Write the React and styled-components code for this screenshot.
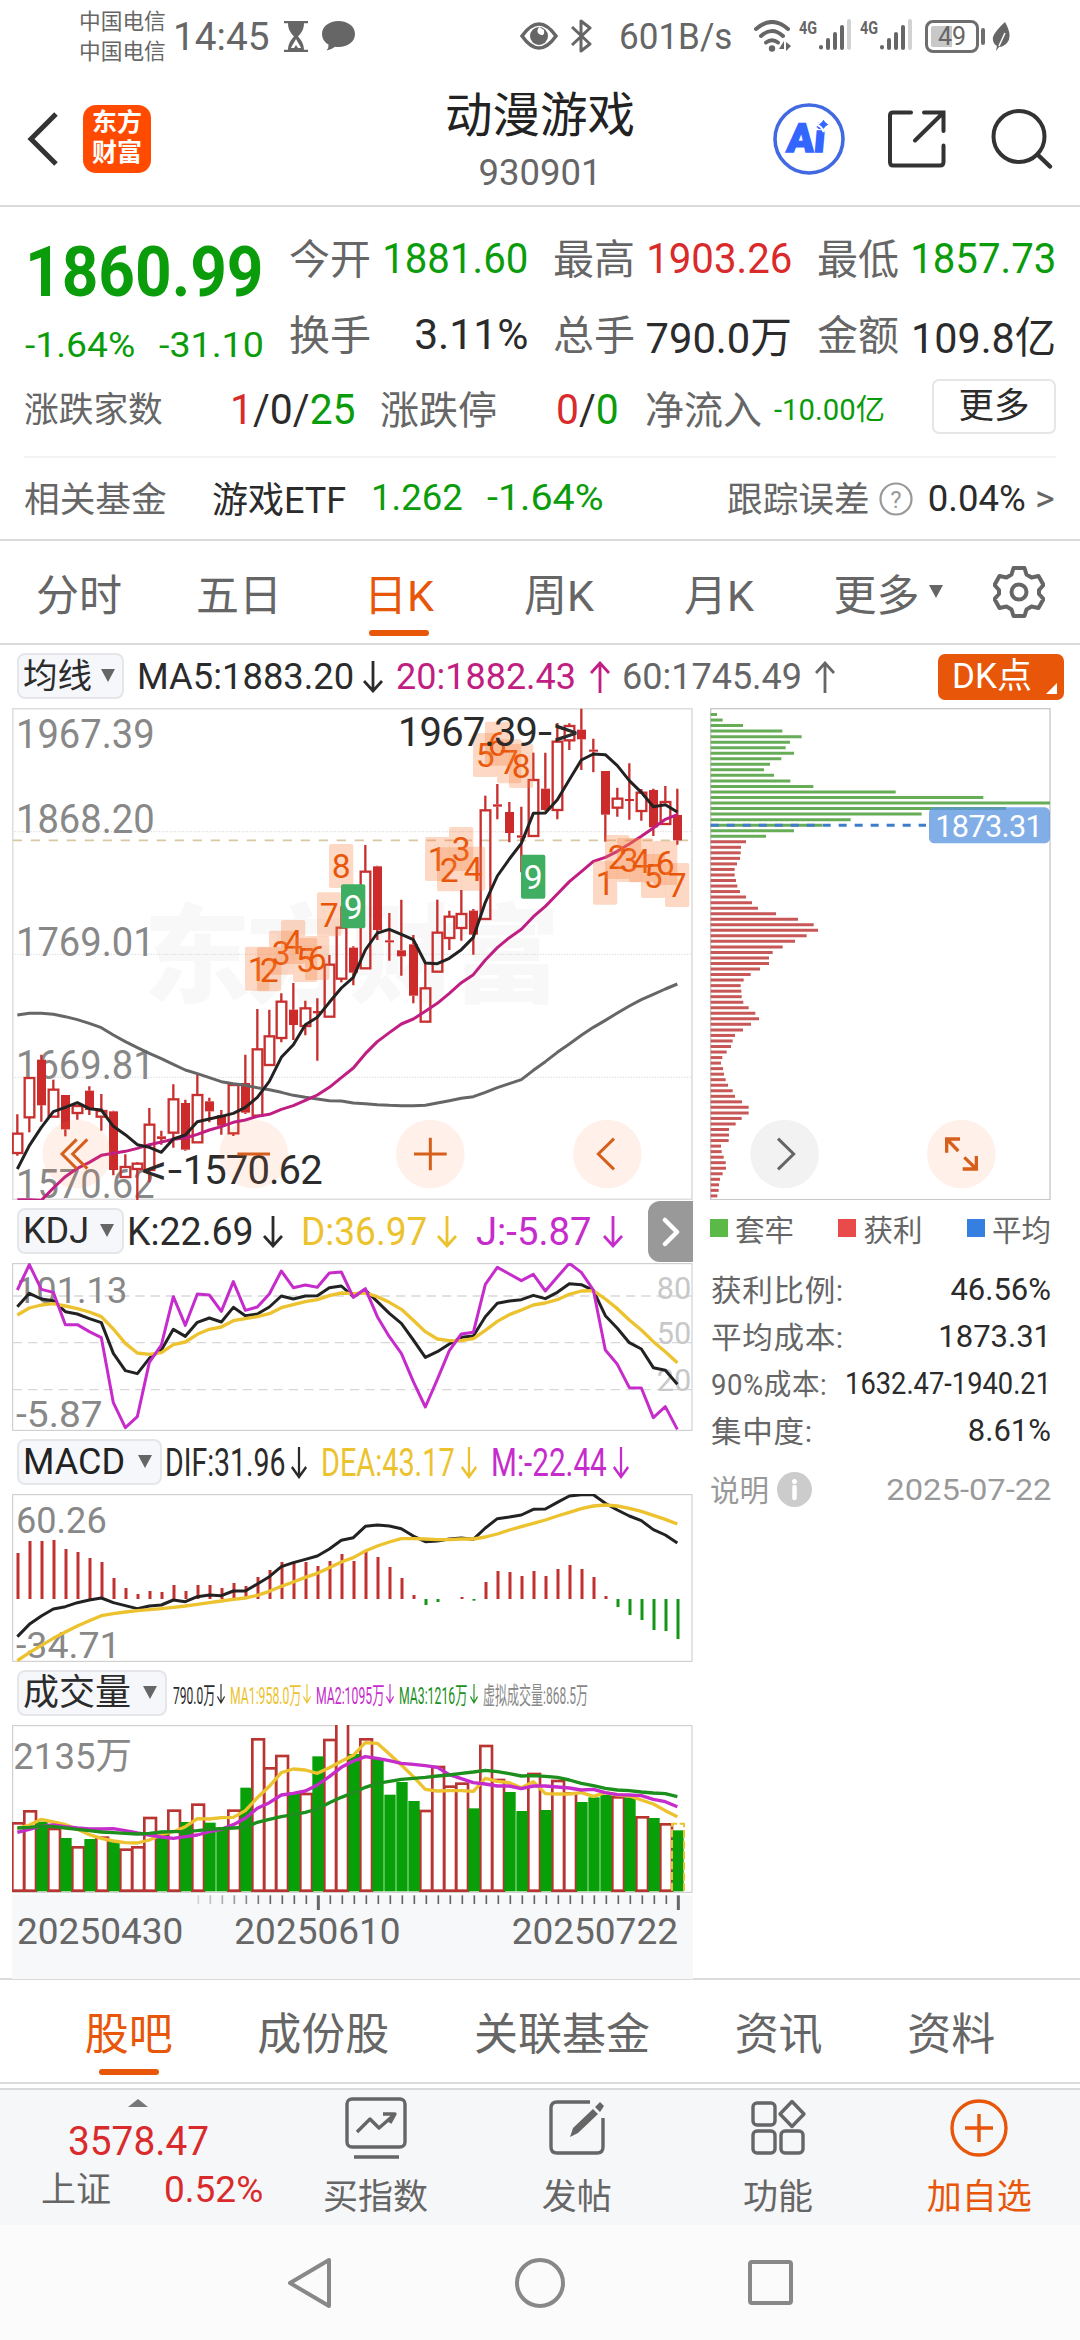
import React from 'react';
import styled, { createGlobalStyle } from 'styled-components';

const GlobalStyle = createGlobalStyle`
  * {
    box-sizing: border-box;
  }
  body {
    margin: 0;
    background: #fff;
    font-family: Roboto, 'Noto Sans CJK SC', sans-serif;
    color: #2b2b2b;
  }
  svg {
    display: block;
    flex: none;
  }
`;

const GREEN = '#0a9c0a';
const RED = '#d92b2b';
const ORANGE = '#e8560a';
const GRAY = '#666';
const DARK = '#2b2b2b';
const YELLOW = '#ecc22e';
const PURPLE = '#c52ccb';
const CANDLE = '#c8302f';

const Page = styled.div`
  width: 1080px;
  height: 2340px;
  overflow: hidden;
  background: #fff;
`;

// text squeezed horizontally by $k, taking $w pixels in its row
const Txt = styled.span`
  display: block;
  flex: none;
  width: ${(p) => (p.$w ? `${p.$w}px` : 'auto')};
  margin-left: ${(p) => p.$ml || 0}px;
  margin-bottom: ${(p) => p.$up || 0}px;
  font-size: ${(p) => p.$fs || 36}px;
  color: ${(p) => p.$c || DARK};
  white-space: nowrap;
  transform: scaleX(${(p) => p.$k || 1});
  transform-origin: ${(p) => (p.$right ? '100%' : '0')} 50%;
`;

const Tint = styled.span`
  color: ${(p) => p.$c};
`;

const Shift = styled.div`
  flex: none;
  margin-left: ${(p) => p.$ml || 0}px;
`;

/* status bar */

const StatusBar = styled.div`
  display: flex;
  align-items: center;
  height: 72px;
  padding-left: 79px;
  color: ${GRAY};
`;

const Carrier = styled.div`
  width: 88px;
  font-size: 21.7px;
  line-height: 30px;
  margin-top: 2px;
`;

const Network = styled.div`
  flex: none;
  display: flex;
  align-items: flex-start;
  height: 34px;
  width: 54px;
  margin-left: ${(p) => p.$ml}px;
  font-weight: 700;
  line-height: 18px;
`;

const Battery = styled.div`
  flex: none;
  width: 54px;
  height: 33px;
  margin-left: 11px;
  border: 3px solid #6e6e6e;
  border-radius: 8px;
  font-size: 25px;
  line-height: 28px;
  text-align: center;
  background: linear-gradient(90deg, #c8c8c8 50%, #fff 50%);
  box-shadow: inset 0 0 0 3px #fff;
`;

const BatteryTip = styled.div`
  flex: none;
  width: 4px;
  height: 17px;
  margin-left: 2px;
  border-radius: 2px;
  background: #6e6e6e;
`;

const SignalBars = () => (
  <svg width="34" height="32" viewBox="0 0 34 32">
    <g stroke="#666" strokeWidth="4" strokeLinecap="round">
      <path d="M3 28v.5" />
      <path d="M10 21v8" />
      <path d="M17 15v14" />
      <path d="M24 8v21" />
      <path d="M31 2v27" stroke="#d2d2d2" />
    </g>
  </svg>
);

const Status = () => (
  <StatusBar>
    <Carrier>
      中国电信
      <br />
      中国电信
    </Carrier>
    <Txt $ml={6} $w={111} $fs={39.5} $k={0.98} $c={GRAY}>
      14:45
    </Txt>
    <svg width="24" height="31" viewBox="0 0 24 31">
      <path d="M0 1h24M0 30h24" stroke="#666" strokeWidth="2.5" />
      <path d="M4 2h16c0 7-3 10-6 13.5c3 3.5 6 7 6 14h-16c0-7 3-10.5 6-14c-3-3.5-6-6.5-6-13.5z" fill="#666" />
      <path d="M12 18c-2 4-4 6-5 9h3l2-3l2 3h3c-1-3-3-5-5-9z" fill="#fff" />
    </svg>
    <Shift $ml={14}>
      <svg width="33" height="30" viewBox="0 0 33 30">
        <path
          d="M16.5 0C26 0 33 5.5 33 13S26 26 16.5 26q-2 0-3.5-.3Q9 29 4.5 29.5Q7 27 6.5 23.5Q0 20 0 13C0 5.5 7 0 16.5 0z"
          fill="#666"
        />
      </svg>
    </Shift>
    <Shift $ml={165}>
      <svg width="38" height="28" viewBox="0 0 38 28">
        <path d="M2 14Q19-10 36 14Q19 38 2 14z" fill="none" stroke="#666" strokeWidth="3.5" />
        <circle cx="19" cy="14" r="9" fill="#666" />
        <path d="M19 5q-4 6 2 8q4 1 3-5z" fill="#fff" />
      </svg>
    </Shift>
    <Shift $ml={12}>
      <svg width="22" height="34" viewBox="0 0 22 34">
        <path d="M2 8l18 17l-9 7V2l9 7L2 26" fill="none" stroke="#666" strokeWidth="3" strokeLinejoin="round" />
      </svg>
    </Shift>
    <Txt $ml={27} $w={135} $fs={36.5} $k={0.96} $c={GRAY}>
      601B/s
    </Txt>
    <svg width="37" height="32" viewBox="0 0 37 32">
      <g fill="none" stroke="#666" strokeWidth="4" strokeLinecap="round">
        <path d="M2 9Q18-5 34 9" />
        <path d="M7 16Q18 6 29 16" />
        <path d="M12 22.5Q18 18 24 22.5" />
      </g>
      <circle cx="18" cy="28.5" r="3.2" fill="#666" />
      <path d="M25 29h5v-8zM32 22v9l5-5z" fill="#666" />
    </svg>
    <Network $ml={8}>
      <Txt $w={19} $fs={18} $k={0.8} $c={GRAY}>
        4G
      </Txt>
      <SignalBars />
    </Network>
    <Network $ml={7}>
      <Txt $w={19} $fs={18} $k={0.8} $c={GRAY}>
        4G
      </Txt>
      <SignalBars />
    </Network>
    <Battery>49</Battery>
    <BatteryTip />
    <Shift $ml={7}>
      <svg width="18" height="29" viewBox="0 0 18 29">
        <path d="M13 0q8 14 2 21q-4 4-8 4l-3 4l1-5q-5-3-4-9Q3 9 13 0z" fill="#666" />
        <path d="M7 24L13 11" stroke="#fff" strokeWidth="1.5" />
      </svg>
    </Shift>
  </StatusBar>
);

/* title bar */

const Header = styled.div`
  display: grid;
  grid-template-columns: 308px 464px 308px;
  align-items: center;
  height: 135px;
  border-bottom: 2px solid #dadada;
`;

const HeaderSide = styled.div`
  display: flex;
  align-items: center;
`;

const Logo = styled.div`
  width: 68px;
  height: 68px;
  margin-left: 24px;
  padding: 3px 9px;
  border-radius: 13px;
  background: #ff4a00;
  color: #fff;
  font-size: 25px;
  font-weight: 700;
  line-height: 30px;
`;

const Title = styled.div`
  text-align: center;
  font-size: 47.5px;
  line-height: 58px;
  margin-top: 5px;
  color: #222;
`;

const Code = styled.div`
  text-align: center;
  font-size: 36.5px;
  line-height: 44px;
  margin-top: 6px;
  color: ${GRAY};
`;

const TitleBar = () => (
  <Header>
    <HeaderSide>
      <Shift $ml={26}>
        <svg width="33" height="56" viewBox="0 0 33 56">
          <path d="M30 3L5 28L30 53" fill="none" stroke="#333" strokeWidth="5" />
        </svg>
      </Shift>
      <Logo>
        东方
        <br />
        财富
      </Logo>
    </HeaderSide>
    <div>
      <Title>动漫游戏</Title>
      <Code>930901</Code>
    </div>
    <HeaderSide>
      <svg width="74" height="74" viewBox="0 0 74 74">
        <circle cx="37" cy="37" r="34" fill="none" stroke="#4169e1" strokeWidth="3.6" />
        <g transform="translate(4.5 0) skewX(-5)">
          <text
            x="14"
            y="50"
            fontSize="40"
            fontWeight="900"
            fontFamily="Roboto, sans-serif"
            fill="#3366ff"
            stroke="#3366ff"
            strokeWidth="1.5"
          >
            Ai
          </text>
        </g>
        <path
          d="M51.5 14.5q1.5 6.500 7.500 8q-6 1.500-7.500 7.500q-1.500-6-7.500-7.500q6-1.500 7.500-8z"
          fill="#3366ff"
          stroke="#fff"
          strokeWidth="2"
        />
      </svg>
      <Shift $ml={41}>
        <svg width="60" height="60" viewBox="0 0 60 60">
          <path
            d="M24 3.5H6q-3 0-3 3V53q0 3.500 3 3.500H53q3.500 0 3.500-3.500V36.500M37 3.500H56.500V22M56 4L28 31.500"
            fill="none"
            stroke="#333"
            strokeWidth="4"
            strokeLinecap="round"
          />
        </svg>
      </Shift>
      <Shift $ml={43}>
        <svg width="64" height="62" viewBox="0 0 64 62">
          <circle cx="29" cy="28.5" r="25.5" fill="none" stroke="#333" strokeWidth="4" />
          <path d="M48 47L60 58.5" stroke="#333" strokeWidth="4.5" strokeLinecap="round" />
        </svg>
      </Shift>
    </HeaderSide>
  </Header>
);

/* quote */

const Quote = styled.div`
  height: 334px;
  padding: 14px 24px 0;
  border-bottom: 2px solid #dadada;
`;

const QuoteTop = styled.div`
  display: flex;
  height: 151px;
`;

const PriceBlock = styled.div`
  width: 265px;
  padding: 15px 0 0 1px;
`;

const Price = styled(Txt)`
  font-weight: 700;
  line-height: 71px;
`;

const ChangeRow = styled.div`
  display: flex;
  margin-top: 20px;
  line-height: 37px;
`;

const StatGrid = styled.div`
  display: grid;
  grid-template-columns: repeat(3, 239px);
  grid-auto-rows: 75.5px;
  column-gap: 25px;
`;

const Stat = styled.div`
  display: flex;
  justify-content: space-between;
  align-items: center;
`;

const Row = styled.div`
  display: flex;
  align-items: center;
  height: ${(p) => p.$h}px;
`;

const MoreButton = styled.div`
  width: 124px;
  height: 55px;
  margin: 0 0 4px auto;
  border: 2px solid #e6e6e6;
  border-radius: 7px;
  font-size: 35.5px;
  line-height: 50px;
  text-align: center;
`;

const Divider = styled.div`
  height: 2px;
  margin-top: 11px;
  background: #f3f3f3;
`;

const STATS = [
  ['今开', '1881.60', GREEN, 0.935],
  ['最高', '1903.26', RED, 0.935],
  ['最低', '1857.73', GREEN, 0.935],
  ['换手', '3.11%', DARK, 0.99],
  ['总手', '790.0万', DARK, 0.97],
  ['金额', '109.8亿', DARK, 0.96],
];

const QuotePanel = () => (
  <Quote>
    <QuoteTop>
      <PriceBlock>
        <Price $fs={71} $k={0.9} $c={GREEN}>
          1860.99
        </Price>
        <ChangeRow>
          <Txt $w={134} $fs={35.5} $k={1.05} $c={GREEN}>
            -1.64%
          </Txt>
          <Txt $fs={35.5} $k={1.06} $c={GREEN}>
            -31.10
          </Txt>
        </ChangeRow>
      </PriceBlock>
      <StatGrid>
        {STATS.map(([label, value, color, k]) => (
          <Stat key={label}>
            <Txt $fs={41} $c={GRAY} $up={5}>
              {label}
            </Txt>
            <Txt $fs={43} $k={k} $c={color} $up={1} $right>
              {value}
            </Txt>
          </Stat>
        ))}
      </StatGrid>
    </QuoteTop>
    <Row $h={73}>
      <Txt $w={206} $fs={34.7} $c={GRAY} $up={4}>
        涨跌家数
      </Txt>
      <Txt $w={150} $fs={43} $k={0.95}>
        <Tint $c={RED}>1</Tint>/0/<Tint $c={GREEN}>25</Tint>
      </Txt>
      <Txt $w={176} $fs={39} $c={GRAY} $up={4}>
        涨跌停
      </Txt>
      <Txt $w={89} $fs={43} $k={0.95}>
        <Tint $c={RED}>0</Tint>/<Tint $c={GREEN}>0</Tint>
      </Txt>
      <Txt $w={129} $fs={39} $c={GRAY} $up={4}>
        净流入
      </Txt>
      <Txt $fs={29} $k={1.01} $c={GREEN} $up={4}>
        -10.00亿
      </Txt>
      <MoreButton>更多</MoreButton>
    </Row>
    <Divider />
    <Row $h={81}>
      <Txt $w={188} $fs={35.7} $c={GRAY} $up={5}>
        相关基金
      </Txt>
      <Txt $w={159} $fs={36} $up={4}>
        游戏ETF
      </Txt>
      <Txt $w={116} $fs={36.5} $k={1} $c={GREEN} $up={2}>
        1.262
      </Txt>
      <Txt $fs={36.5} $k={1.08} $c={GREEN} $up={2}>
        -1.64%
      </Txt>
      <Txt $ml={132} $fs={35.7} $c={GRAY} $up={5}>
        跟踪误差
      </Txt>
      <Shift $ml={9}>
        <svg width="34" height="34" viewBox="0 0 34 34">
          <circle cx="17" cy="17" r="15.5" fill="none" stroke="#999" strokeWidth="2.2" />
          <text x="17" y="25.5" fontSize="24" textAnchor="middle" fill="#999">
            ?
          </text>
        </svg>
      </Shift>
      <Txt $ml={15} $w={107} $fs={36.5} $k={1}>
        0.04%
      </Txt>
      <Txt $fs={36} $k={1.05} $c={GRAY}>
        &gt;
      </Txt>
    </Row>
  </Quote>
);

/* period tabs */

const Periods = styled.div`
  display: grid;
  grid-template-columns: repeat(5, 160px) 178px 84px;
  height: 104px;
  margin-left: -1px;
  border-bottom: 2px solid #dadada;
`;

const Tab = styled.div`
  display: flex;
  align-items: center;
  justify-content: center;
  position: relative;
  padding-bottom: 1px;
  font-size: ${(p) => p.$fs || 43}px;
  color: ${(p) => (p.$active ? ORANGE : GRAY)};

  &::after {
    content: '';
    display: ${(p) => (p.$active ? 'block' : 'none')};
    position: absolute;
    left: 50%;
    bottom: 7px;
    width: 60px;
    height: 6px;
    margin-left: -30px;
    border-radius: 3px;
    background: ${ORANGE};
  }
`;

const Caret = styled.i`
  flex: none;
  margin-left: ${(p) => p.$ml || 0}px;
  border: solid transparent;
  border-width: 13px 7px 0;
  border-top-color: ${GRAY};
`;

const PeriodTabs = () => (
  <Periods>
    {['分时', '五日', '日K', '周K', '月K'].map((name) => (
      <Tab key={name} $active={name === '日K'}>
        {name}
      </Tab>
    ))}
    <Tab>
      更多
      <Caret $ml={9} />
    </Tab>
    <Tab>
      <svg width="52" height="52" viewBox="0 0 52 52">
        <path
          d="M20.5 2h11l2 6.5l5 3l7-1.5l5 9l-4.5 5v4l4.5 5l-5 9l-7-1.5l-5 3l-2 6.5h-11l-2-6.5l-5-3l-7 1.5l-5-9l4.5-5v-4l-4.5-5l5-9l7 1.5l5-3z"
          fill="none"
          stroke="#666"
          strokeWidth="4"
          strokeLinejoin="round"
        />
        <circle cx="26" cy="26" r="7.5" fill="none" stroke="#666" strokeWidth="4" />
      </svg>
    </Tab>
  </Periods>
);

/* indicator headers */

const IndicatorRow = styled.div`
  display: flex;
  align-items: center;
  height: 63px;
  padding-left: 17px;
`;

const Pill = styled.div`
  flex: none;
  display: flex;
  align-items: center;
  justify-content: space-between;
  width: ${(p) => p.$w}px;
  height: 46px;
  margin-bottom: 2px;
  padding: 0 ${(p) => p.$pr || 8}px 0 4px;
  border: 2px solid #e4e6ea;
  border-radius: 8px;
  background: #f6f7fa;
  font-size: 36px;
  line-height: 42px;
  color: #222;
`;

const DkButton = styled.div`
  position: relative;
  width: 126px;
  height: 46px;
  margin: 0 16px 0 auto;
  padding-left: 14px;
  border-radius: 7px;
  background: ${ORANGE};
  color: #fff;
  font-size: 35px;
  line-height: 45px;

  &::after {
    content: '';
    position: absolute;
    right: 7px;
    bottom: 6px;
    border-left: 11px solid transparent;
    border-bottom: 11px solid #fff;
  }
`;

const Arrow = ({ up, color, ml = 9, w = 20, h = 32 }) => (
  <Shift $ml={ml}>
    <svg width={w} height={h} viewBox="0 0 20 32" preserveAspectRatio="none">
      <path
        d={up ? 'M10 32V2M1 12L10 2L19 12' : 'M10 0V30M1 20L10 30L19 20'}
        fill="none"
        stroke={color}
        strokeWidth="2.8"
      />
    </svg>
  </Shift>
);

/* charts: drawn in thirds of a pixel, one candle every 12px */

const N = 56;
const cx = (i) => 52 + 36 * i;
const line = (ys) => ys.map((y, i) => `${cx(i)},${y}`).join(' ');

const Chart = styled.svg`
  margin-left: 12px;
  font-family: Roboto, 'Noto Sans CJK SC', sans-serif;
`;

const Line = ({ ys, color, width = 9 }) => (
  <polyline points={line(ys)} fill="none" stroke={color} strokeWidth={width} strokeLinejoin="round" />
);

// [hollow, body top, body bottom, high, low]
const CANDLES = [
  [1, 1298, 1357, 1241, 1365], [1, 1131, 1250, 1131, 1295], [0, 1077, 1214, 1062, 1263], [1, 1166, 1248, 1137, 1248],
  [0, 1183, 1286, 1183, 1307], [1, 1215, 1237, 1212, 1257], [0, 1170, 1228, 1157, 1243], [1, 1230, 1248, 1180, 1290],
  [0, 1232, 1408, 1230, 1424], [1, 1398, 1429, 1361, 1432], [1, 1388, 1405, 1385, 1499], [1, 1271, 1408, 1222, 1445],
  [0, 1307, 1315, 1290, 1332], [1, 1195, 1296, 1151, 1341], [0, 1207, 1347, 1197, 1350], [1, 1182, 1325, 1123, 1325],
  [0, 1202, 1232, 1191, 1265], [0, 1243, 1275, 1228, 1302], [1, 1152, 1298, 1152, 1306], [0, 1147, 1236, 1062, 1240],
  [1, 1045, 1245, 925, 1245], [1, 1006, 1093, 927, 1095], [1, 902, 1012, 878, 1025], [0, 927, 973, 847, 1018],
  [1, 922, 976, 900, 1004], [0, 931, 938, 893, 1080], [1, 791, 948, 763, 948], [1, 680, 834, 617, 845],
  [0, 741, 816, 737, 854], [1, 512, 803, 433, 803], [0, 497, 688, 495, 718], [0, 719, 725, 637, 780],
  [0, 749, 767, 597, 825], [0, 731, 885, 703, 908], [1, 862, 963, 788, 963], [1, 695, 813, 597, 813],
  [1, 647, 712, 630, 748], [1, 639, 682, 568, 720], [0, 630, 702, 625, 762], [1, 328, 655, 285, 655],
  [0, 311, 318, 250, 356], [0, 334, 397, 304, 425], [0, 404, 411, 318, 515], [1, 237, 406, 156, 406],
  [0, 264, 328, 156, 330], [1, 122, 328, 67, 356], [1, 75, 119, 68, 148], [0, 87, 116, 24, 208],
  [0, 147, 153, 114, 215], [0, 211, 342, 211, 423], [1, 293, 321, 261, 348], [0, 295, 301, 188, 357],
  [1, 275, 331, 265, 360], [0, 268, 380, 264, 406], [1, 303, 370, 256, 372], [0, 343, 419, 264, 432],
];

const MA5 = [
  1405, 1335, 1280, 1233, 1220, 1206, 1224, 1228, 1277, 1302, 1332, 1340, 1355, 1315, 1303, 1263, 1255, 1247, 1238,
  1220, 1190, 1142, 1070, 1032, 972, 950, 905, 862, 830, 748, 697, 686, 701, 717, 787, 789, 773, 747, 710, 605, 526,
  475, 428, 338, 337, 297, 237, 178, 160, 162, 195, 240, 275, 318, 312, 334,
];
const MA20 = [
  1497, 1497, 1499, 1462, 1428, 1403, 1385, 1364, 1358, 1352, 1343, 1332, 1324, 1316, 1312, 1301, 1288, 1278, 1265,
  1258, 1247, 1241, 1226, 1215, 1199, 1183, 1160, 1131, 1102, 1059, 1023, 996, 970, 955, 932, 908, 878, 846, 822, 778,
  741, 711, 686, 648, 617, 580, 543, 513, 482, 470, 452, 430, 407, 382, 356, 342,
];
const MA60 = [
  943, 938, 938, 941, 948, 957, 968, 981, 1003, 1023, 1041, 1058, 1074, 1091, 1108, 1119, 1131, 1143, 1149, 1154, 1161,
  1167, 1175, 1184, 1190, 1195, 1200, 1201, 1207, 1209, 1212, 1214, 1215, 1215, 1214, 1207, 1200, 1193, 1188, 1175,
  1161, 1149, 1137, 1109, 1083, 1055, 1030, 1004, 980, 959, 937, 916, 897, 881, 865, 850,
];

// [candle, digit, top]
const MARKS = [
  [20, 1, 738], [21, 2, 740], [22, 3, 690], [23, 4, 658], [24, 5, 712], [25, 6, 706], [26, 7, 575], [27, 8, 430],
  [28, 9, 551], [35, 1, 409], [36, 2, 440], [37, 3, 379], [38, 4, 438], [39, 5, 97], [40, 6, 63], [41, 7, 116],
  [42, 8, 130], [43, 9, 462], [49, 1, 480], [50, 2, 403], [51, 3, 412], [52, 4, 413], [53, 5, 460], [54, 6, 421],
  [55, 7, 487],
];

const RoundButton = ({ x, gray, children }) => (
  <g transform={`translate(${x} 1360)`} fill="none" strokeWidth="9" stroke={gray ? '#666' : '#d65f1c'}>
    <circle r="103" fill={gray ? '#f2f2f2' : '#ff7a33'} fillOpacity={gray ? 1 : 0.11} stroke="none" />
    {children}
  </g>
);

const AxisLabel = ({ y, children, size = 120, width = 416, x = 48 }) => (
  <text x={x} y={y} fontSize={size} textLength={width} lengthAdjust="spacingAndGlyphs" fill="#888">
    {children}
  </text>
);

const CandleChart = () => (
  <Chart width="682" height="492" viewBox="36 22 2046 1476">
    <text x="430" y="880" fontSize="322" textLength="1250" fontWeight="900" fill="#f8f8f8">
      东方财富
    </text>
    {[393, 761, 1130].map((y) => (
      <path key={y} d={`M36 ${y}H2076`} stroke="#e2e2e2" strokeWidth="4" strokeDasharray="4 4" />
    ))}
    <rect x="38" y="24" width="2038" height="1472" fill="none" stroke="#dedede" strokeWidth="5" />
    <path d="M38 419H2076" stroke="#d9c8a4" strokeWidth="5" strokeDasharray="28 26" />
    <AxisLabel y={142}>1967.39</AxisLabel>
    <AxisLabel y={397}>1868.20</AxisLabel>
    <AxisLabel y={766}>1769.01</AxisLabel>
    <AxisLabel y={1135}>1669.81</AxisLabel>
    <AxisLabel y={1492}>1570.62</AxisLabel>
    {CANDLES.map(([hollow, top, bottom, high, low], i) => (
      <g key={i} stroke={CANDLE} strokeWidth="7">
        <path d={`M${cx(i)} ${high}V${top}M${cx(i)} ${bottom}V${low}`} />
        {hollow ? (
          <rect x={cx(i) - 14} y={top + 1} width="29" height={bottom - top - 1} fill="none" />
        ) : (
          <rect x={cx(i) - 13} y={top} width="27" height={bottom - top} fill="#cd2b2b" stroke="none" />
        )}
      </g>
    ))}
    <Line ys={MA60} color="#666" />
    <Line ys={MA20} color="#c01e82" />
    <Line ys={MA5} color="#222" />
    {MARKS.map(([i, digit, top]) => (
      <g key={i}>
        <rect
          x={cx(i) - 37}
          y={top}
          width="73"
          height="132"
          rx="6"
          fill={digit === 9 ? '#3fad62' : '#f9813f'}
          fillOpacity={digit === 9 ? 1 : 0.3}
        />
        <text x={cx(i)} y={top + 103} fontSize="101" textAnchor="middle" fill={digit === 9 ? '#fff' : ORANGE}>
          {digit}
        </text>
      </g>
    ))}
    <text x="1194" y="135" fontSize="120" textLength="420" fill={DARK}>
      1967.39
    </text>
    <text x="1614" y="135" fontSize="120" textLength="122" lengthAdjust="spacingAndGlyphs" fill={DARK}>
      -&gt;
    </text>
    <text x="424" y="1449" fontSize="120" textLength="122" lengthAdjust="spacingAndGlyphs" fill={DARK}>
      &lt;-
    </text>
    <text x="548" y="1449" fontSize="120" textLength="420" fill={DARK}>
      1570.62
    </text>
    <RoundButton x={230}>
      <path d="M0-44L-44 0L0 44M32-44L-12 0L32 44" />
    </RoundButton>
    <RoundButton x={761}>
      <path d="M-49 0H49" />
    </RoundButton>
    <RoundButton x={1291}>
      <path d="M-49 0H49M0-49V49" />
    </RoundButton>
    <RoundButton x={1822}>
      <path d="M20-46L-27 0L20 46" />
    </RoundButton>
  </Chart>
);

const K_LINE = [
  320, 280, 297, 302, 335, 342, 356, 368, 460, 512, 521, 475, 450, 388, 409, 367, 354, 366, 322, 347, 342, 321, 288,
  297, 288, 287, 263, 258, 290, 270, 305, 340, 370, 420, 472, 455, 432, 412, 408, 350, 310, 303, 299, 286, 296, 277,
  251, 254, 271, 347, 385, 428, 447, 503, 511, 553,
];
const D_LINE = [
  345, 324, 315, 311, 318, 326, 336, 350, 387, 430, 459, 463, 458, 434, 426, 403, 388, 381, 362, 356, 350, 341, 323,
  314, 305, 299, 287, 279, 281, 279, 290, 307, 328, 361, 395, 417, 422, 422, 416, 391, 364, 344, 330, 315, 309, 299,
  283, 273, 272, 297, 326, 360, 390, 425, 455, 488,
];
const J_LINE = [
  270, 194, 268, 277, 374, 374, 395, 413, 608, 683, 650, 487, 435, 290, 376, 282, 285, 334, 245, 331, 321, 282, 213,
  263, 255, 262, 219, 216, 292, 266, 350, 410, 460, 545, 621, 538, 452, 402, 397, 253, 202, 222, 242, 223, 273, 231,
  190, 217, 270, 450, 493, 563, 564, 653, 620, 688,
];

const KdjChart = () => (
  <Chart width="682" height="168" viewBox="36 189 2046 504">
    <rect x="38" y="191" width="2038" height="500" fill="none" stroke="#c8c8c8" strokeWidth="3" />
    {[288, 428, 569].map((y) => (
      <path key={y} d={`M38 ${y}H2076`} stroke="#d8d8d8" strokeWidth="4" strokeDasharray="28 18" />
    ))}
    {[[80, 296], [50, 431], [20, 572]].map(([v, y]) => (
      <text key={v} x="2074" y={y} fontSize="92" textAnchor="end" fill="#c8c8c8">
        {v}
      </text>
    ))}
    <AxisLabel y={308} size={108} width={334}>101.13</AxisLabel>
    <AxisLabel y={681} size={108} width={260}>-5.87</AxisLabel>
    <Line ys={K_LINE} color="#222" />
    <Line ys={D_LINE} color={YELLOW} width={10} />
    <Line ys={J_LINE} color={PURPLE} />
  </Chart>
);

const MACD_TIPS = [
  369, 333, 333, 330, 357, 366, 384, 396, 444, 474, 492, 483, 486, 465, 483, 465, 465, 474, 459, 468, 441, 420, 396,
  396, 396, 408, 393, 372, 393, 360, 381, 411, 444, 495, 525, 516, 507, 501, 512, 456, 423, 426, 438, 423, 438, 417,
  405, 417, 441, 498, 531, 555, 570, 600, 603, 627,
];
const DIF = [
  620, 583, 558, 537, 530, 518, 510, 504, 518, 527, 536, 528, 525, 510, 515, 500, 495, 497, 483, 483, 462, 440, 410,
  398, 388, 378, 357, 331, 323, 289, 285, 288, 296, 318, 335, 333, 327, 324, 328, 294, 266, 261, 255, 238, 237, 217,
  198, 194, 194, 220, 240, 258, 272, 299, 315, 339,
];
const DEA = [
  692, 668, 646, 625, 606, 588, 572, 557, 551, 546, 542, 539, 536, 532, 528, 523, 518, 513, 508, 504, 496, 484, 469,
  456, 442, 430, 413, 396, 383, 363, 348, 336, 326, 326, 327, 329, 329, 327, 327, 321, 312, 300, 290, 280, 270, 258,
  247, 236, 228, 225, 228, 235, 244, 256, 268, 282,
];

const MacdChart = () => (
  <Chart width="682" height="168" viewBox="36 192 2046 504">
    <rect x="38" y="194" width="2038" height="500" fill="none" stroke="#c8c8c8" strokeWidth="3" />
    <AxisLabel y={310} size={108} width={272}>60.26</AxisLabel>
    <AxisLabel y={683} size={108} width={314}>-34.71</AxisLabel>
    {MACD_TIPS.map((y, i) => (
      <path key={i} d={`M${cx(i) + 2} 507V${y}`} stroke={y > 507 ? '#159515' : '#c0322f'} strokeWidth="9" />
    ))}
    <Line ys={DIF} color="#222" />
    <Line ys={DEA} color={YELLOW} width={10} />
  </Chart>
);

const VOLUME = [
  490, 454, 485, 507, 534, 562, 537, 533, 543, 569, 562, 474, 525, 452, 486, 434, 488, 502, 452, 383, 238, 325, 288,
  400, 402, 289, 240, 186, 282, 238, 297, 404, 366, 423, 453, 321, 380, 371, 445, 258, 360, 396, 453, 342, 450, 363,
  400, 426, 412, 405, 412, 412, 472, 474, 493, 511,
];
const VOLUME_DOWN = new Set([
  2, 4, 6, 8, 12, 14, 16, 17, 19, 23, 25, 28, 30, 31, 32, 33, 38, 41, 42, 44, 47, 48, 49, 51, 53, 55,
]);
const VMA1 = [
  505, 495, 478, 486, 494, 508, 524, 535, 543, 548, 549, 540, 524, 515, 500, 476, 477, 473, 472, 452, 413, 379, 338,
  327, 330, 340, 323, 304, 286, 248, 250, 282, 315, 350, 388, 393, 392, 392, 394, 355, 364, 368, 383, 365, 401, 402,
  402, 398, 409, 398, 405, 408, 420, 432, 452, 470,
];
const VMA2 = [
  517, 508, 498, 495, 500, 504, 507, 507, 506, 512, 519, 525, 531, 535, 530, 525, 515, 508, 494, 475, 445, 428, 405,
  400, 393, 375, 350, 322, 303, 290, 295, 302, 310, 313, 317, 322, 344, 356, 368, 372, 378, 378, 386, 378, 378, 381,
  384, 390, 388, 398, 404, 405, 407, 418, 425, 440,
];
const VMA3 = [
  504, 502, 498, 500, 504, 508, 512, 516, 518, 520, 522, 520, 516, 515, 514, 512, 508, 506, 504, 502, 487, 478, 470,
  464, 457, 447, 428, 412, 398, 382, 370, 364, 358, 355, 352, 348, 345, 340, 336, 331, 335, 341, 348, 347, 349, 352,
  360, 370, 377, 385, 390, 392, 396, 399, 401, 410,
];

const VolumeChart = () => (
  <Chart width="682" height="168" viewBox="36 195 2046 504">
    <rect x="38" y="197" width="2038" height="500" fill="none" stroke="#c8c8c8" strokeWidth="3" />
    {VOLUME.map((y, i) =>
      VOLUME_DOWN.has(i) ? null : (
        <rect key={i} x={cx(i) - 15} y={y} width="35" height={692 - y} fill="#fff" stroke="#b83532" strokeWidth="8" />
      )
    )}
    {VOLUME.map((y, i) =>
      VOLUME_DOWN.has(i) ? <rect key={i} x={cx(i) - 15} y={y} width="34" height={694 - y} fill="#08a008" /> : null
    )}
    <AxisLabel y={328} size={112} width={356} x={40}>2135万</AxisLabel>
    <path d="M2016 692V491H2052V692" fill="none" stroke={YELLOW} strokeWidth="6" strokeDasharray="24 8" />
    <Line ys={VMA1} color={YELLOW} width={10} />
    <Line ys={VMA2} color={PURPLE} width={10} />
    <Line ys={VMA3} color="#1c8f1c" width={10} />
  </Chart>
);

const TimeAxis = styled.div`
  height: 84px;
  margin: 2px 0 0 12px;
  background: #f7f8fa;
`;

const Dates = styled.div`
  display: flex;
  justify-content: space-between;
  padding: 0 15px 0 5px;
  margin-top: -2px;
  font-size: 37px;
  line-height: 44px;
  color: ${GRAY};
`;

const TimeLine = () => (
  <TimeAxis>
    <svg width="681" height="17" viewBox="36 704 2043 51">
      {Array.from({ length: N - 15 }, (_, k) => k + 15).map((i) => {
        const major = i === 25 || i === 55;
        return (
          <path
            key={i}
            d={`M${cx(i) + 3} 705V${major ? 749 : 731}`}
            stroke="#666"
            strokeWidth={major ? 9 : 5}
            opacity={Math.min(1, (i - 13) / 8)}
          />
        );
      })}
    </svg>
    <Dates>
      <span>20250430</span>
      <Txt $ml={-60} $fs={37} $c={GRAY}>20250610</Txt>
      <span>20250722</span>
    </Dates>
  </TimeAxis>
);

const NextButton = styled.div`
  display: flex;
  align-items: center;
  justify-content: center;
  width: 45px;
  height: 61px;
  margin-left: auto;
  border-radius: 12px 0 0 12px;
  background: #999;
`;

/* chip distribution panel */

const ChartArea = styled.div`
  display: flex;
  height: 1270px;
`;

const LeftPane = styled.div`
  flex: none;
  width: 693px;
`;

const RightPane = styled.div`
  width: 341px;
  margin-left: 17px;
`;

const Legend = styled.div`
  display: flex;
  justify-content: space-between;
  align-items: center;
  height: 56px;
  font-size: 29.5px;
  color: ${GRAY};
`;

const LegendItem = styled.div`
  display: flex;
  align-items: center;
  gap: 7px;

  &::before {
    content: '';
    width: 18px;
    height: 18px;
    background: ${(p) => p.$c};
  }
`;

const CostRow = styled.div`
  display: flex;
  align-items: center;
  justify-content: space-between;
  height: 47px;
  margin-top: ${(p) => p.$mt || 0}px;
`;

const CostLabel = styled(Txt)`
  letter-spacing: 0.6px;
  padding-left: 1px;
`;

const Note = styled.div`
  display: flex;
  align-items: center;
`;

const PROFILE = [
  81, 98, 159, 277, 335, 300, 287, 312, 274, 240, 222, 252, 301, 370, 617, 880, 1080, 948, 695, 482, 397, 312, 228,
  168, 153, 152, 150, 141, 134, 134, 138, 142, 150, 168, 186, 204, 258, 324, 371, 384, 350, 315, 278, 248, 237, 237,
  210, 182, 161, 152, 154, 155, 160, 176, 196, 207, 183, 159, 135, 128, 123, 110, 97, 93, 99, 102, 107, 114, 128, 135,
  156, 176, 176, 155, 137, 117, 117, 116, 93, 95, 101, 107, 108, 98, 90, 87, 86, 82,
];

const ChipChart = () => (
  <svg width="341" height="492" viewBox="60 22 1023 1476">
    <rect x="62" y="24" width="1018" height="1473" fill="none" stroke="#c8c8c8" strokeWidth="4" />
    {PROFILE.map((x, i) => (
      <path
        key={i}
        d={`M62 ${41.5 + i * 16.6}H${x}`}
        stroke={i < 23 ? '#67ad57' : '#c85757'}
        strokeWidth="9"
      />
    ))}
    <path d="M62 374H708" stroke="#3d7dca" strokeWidth="9" strokeDasharray="24 24" />
    <rect x="717" y="320" width="363" height="108" rx="16" fill="#5b95e0" fillOpacity=".76" />
    <text x="736" y="408" fontSize="92" textLength="322" fill="#fff" fontFamily="Roboto, sans-serif">
      1873.31
    </text>
    <RoundButton x={284} gray>
      <path d="M-20-46L27 0L-20 46" />
    </RoundButton>
    <RoundButton x={814}>
      <g strokeWidth="10">
        <path d="M-4-45H-44V-4M-44-45L-9-9M4 45H45V6M45 45L9 10" />
      </g>
    </RoundButton>
  </svg>
);

/* bottom */

const SectionTabs = styled.div`
  display: flex;
  justify-content: space-evenly;
  height: 106px;
  border-top: 2px solid #dadada;
  border-bottom: 2px solid #dadada;
`;

const BottomBar = styled.div`
  display: flex;
  height: 137px;
  margin-top: 4px;
  border-top: 2px solid #dadada;
  background: #f6f7f9;
`;

const IndexBox = styled.div`
  width: 275px;
  padding-top: 9px;
`;

const UpCaret = styled.div`
  width: 0;
  margin-left: 128px;
  border: solid transparent;
  border-width: 0 10px 8px;
  border-bottom-color: #777;
`;

const Action = styled.div`
  width: 201.25px;
  display: flex;
  flex-direction: column;
  align-items: center;
  padding-top: 6px;
  font-size: 35px;
  line-height: 46px;
  color: ${(p) => p.$c || GRAY};

  svg {
    margin-bottom: 15px;
  }
`;

const SystemNav = styled.div`
  display: flex;
  justify-content: space-between;
  align-items: center;
  height: 116px;
  padding: 0 287px 1px;
  background: #fbfbfb;
`;

const iconProps = { fill: 'none', stroke: '#666', strokeWidth: 3.4, strokeLinejoin: 'round' };

const App = () => (
  <Page>
    <GlobalStyle />
    <Status />
    <TitleBar />
    <QuotePanel />
    <PeriodTabs />
    <IndicatorRow>
      <Pill $w={107} $pr={7}>
        <Txt $fs={34.5}>均线</Txt>
        <Caret />
      </Pill>
      <Txt $ml={13} $w={217} $k={1.01}>MA5:1883.20</Txt>
      <Arrow color={DARK} />
      <Txt $ml={13} $w={185} $k={1} $c="#c01e82">20:1882.43</Txt>
      <Arrow up color="#c01e82" />
      <Txt $ml={12} $w={184} $k={1} $c={GRAY}>60:1745.49</Txt>
      <Arrow up color={GRAY} />
      <DkButton>DK点</DkButton>
    </IndicatorRow>
    <ChartArea>
      <LeftPane>
        <CandleChart />
        <IndicatorRow>
          <Pill $w={107}>
            <Txt>KDJ</Txt>
            <Caret />
          </Pill>
          <Txt $ml={3} $w={127} $fs={39} $k={0.96}>K:22.69</Txt>
          <Arrow color={DARK} />
          <Txt $ml={18} $w={127} $fs={39} $k={0.95} $c={YELLOW}>D:36.97</Txt>
          <Arrow color={YELLOW} />
          <Txt $ml={19} $w={118} $fs={39} $k={0.98} $c={PURPLE}>J:-5.87</Txt>
          <Arrow color={PURPLE} />
          <NextButton>
            <svg width="18" height="30" viewBox="0 0 18 30">
              <path
                d="M3 3L15 15L3 27"
                fill="none"
                stroke="#fff"
                strokeWidth="4.5"
                strokeLinecap="round"
                strokeLinejoin="round"
              />
            </svg>
          </NextButton>
        </IndicatorRow>
        <KdjChart />
        <IndicatorRow>
          <Pill $w={145}>
            MACD
            <Caret />
          </Pill>
          <Txt $ml={3} $w={119} $fs={39} $k={0.73}>DIF:31.96</Txt>
          <Arrow color={DARK} ml={7} w={16} />
          <Txt $ml={14} $w={133} $fs={39} $k={0.74} $c={YELLOW}>DEA:43.17</Txt>
          <Arrow color={YELLOW} ml={7} w={16} />
          <Txt $ml={14} $w={115} $fs={39} $k={0.76} $c={PURPLE}>M:-22.44</Txt>
          <Arrow color={PURPLE} ml={7} w={16} />
        </IndicatorRow>
        <MacdChart />
        <IndicatorRow>
          <Pill $w={150}>
            <Txt>成交量</Txt>
            <Caret />
          </Pill>
          <Txt $ml={6} $w={42} $fs={24} $k={0.5}>790.0万</Txt>
          <Arrow color={DARK} ml={2} w={8} h={20} />
          <Txt $ml={5} $w={71} $fs={24} $k={0.51} $c={YELLOW}>MA1:958.0万</Txt>
          <Arrow color={YELLOW} ml={2} w={8} h={20} />
          <Txt $ml={5} $w={68} $fs={24} $k={0.51} $c={PURPLE}>MA2:1095万</Txt>
          <Arrow color={PURPLE} ml={2} w={8} h={20} />
          <Txt $ml={5} $w={69} $fs={24} $k={0.51} $c="#1c8f1c">MA3:1216万</Txt>
          <Arrow color="#1c8f1c" ml={2} w={8} h={20} />
          <Txt $ml={5} $fs={24} $k={0.5} $c="#888">虚拟成交量:868.5万</Txt>
        </IndicatorRow>
        <VolumeChart />
        <TimeLine />
      </LeftPane>
      <RightPane>
        <ChipChart />
        <Legend>
          <LegendItem $c="#5bb947">套牢</LegendItem>
          <LegendItem $c="#e94b4b">获利</LegendItem>
          <LegendItem $c="#357fe0">平均</LegendItem>
        </Legend>
        <CostRow $mt={10}>
          <CostLabel $fs={30} $k={1.02} $c={GRAY} $up={4}>获利比例:</CostLabel>
          <Txt $fs={31} $k={1} $right>46.56%</Txt>
        </CostRow>
        <CostRow>
          <CostLabel $fs={30} $k={1.02} $c={GRAY} $up={4}>平均成本:</CostLabel>
          <Txt $fs={31} $k={1} $right>1873.31</Txt>
        </CostRow>
        <CostRow>
          <CostLabel $fs={29} $k={0.95} $w={100} $c={GRAY} $up={3}>90%成本:</CostLabel>
          <Txt $fs={31} $k={0.88} $right>1632.47-1940.21</Txt>
        </CostRow>
        <CostRow>
          <CostLabel $fs={30} $k={1.02} $c={GRAY} $up={4}>集中度:</CostLabel>
          <Txt $fs={31} $k={1} $right>8.61%</Txt>
        </CostRow>
        <CostRow $mt={12}>
          <Note>
            <Txt $fs={29.5} $w={67} $c="#999" $up={3}>说明</Txt>
            <svg width="35" height="35" viewBox="0 0 35 35">
              <circle cx="17.5" cy="17.5" r="17.5" fill="#ccc" />
              <path d="M17.5 15V26" stroke="#fff" strokeWidth="4.5" strokeLinecap="round" />
              <circle cx="17.5" cy="9.5" r="2.5" fill="#fff" />
            </svg>
          </Note>
          <Txt $fs={30} $k={1.09} $c="#999" $right>2025-07-22</Txt>
        </CostRow>
      </RightPane>
    </ChartArea>
    <SectionTabs>
      {['股吧', '成份股', '关联基金', '资讯', '资料'].map((name, i) => (
        <Tab key={name} $fs={44} $active={i === 0}>
          {name}
        </Tab>
      ))}
    </SectionTabs>
    <BottomBar>
      <IndexBox>
        <UpCaret />
        <Row $h={68}>
          <Txt $ml={68} $fs={40} $k={0.97} $c={RED}>3578.47</Txt>
        </Row>
        <Row $h={32}>
          <Txt $ml={41} $w={123} $fs={35} $c={GRAY} $up={9}>上证</Txt>
          <Txt $fs={37} $k={1} $c={RED} $up={4}>0.52%</Txt>
        </Row>
      </IndexBox>
      <Action>
        <svg width="62" height="64" viewBox="0 0 62 64">
          <rect x="2" y="3" width="58" height="48" rx="5" {...iconProps} />
          <path d="M9 61H54M12 36L25 23L34 32L50 18M38 18H50L45 27" {...iconProps} />
        </svg>
        买指数
      </Action>
      <Action>
        <svg width="62" height="64" viewBox="0 0 62 64">
          <path d="M44 6H11Q5 6 5 12V51Q5 57 11 57H51Q57 57 57 51V22" {...iconProps} />
          <path d="M24 41L27 32L47 13L52 18L32 37zM49 11L54 6L58 10L54 16z" fill="#666" />
        </svg>
        发帖
      </Action>
      <Action>
        <svg width="62" height="64" viewBox="0 0 62 64">
          <rect x="6" y="7" width="22" height="22" rx="4" {...iconProps} />
          <rect x="6" y="35" width="22" height="22" rx="4" {...iconProps} />
          <rect x="34" y="35" width="22" height="22" rx="4" {...iconProps} />
          <path d="M45 5.5L57 18L45 30.5L33 18z" {...iconProps} />
        </svg>
        功能
      </Action>
      <Action $c={ORANGE}>
        <svg width="62" height="64" viewBox="0 0 62 64">
          <circle cx="31" cy="32" r="27" {...iconProps} stroke={ORANGE} />
          <path d="M17 32H45M31 18V46" {...iconProps} stroke={ORANGE} />
        </svg>
        加自选
      </Action>
    </BottomBar>
    <SystemNav>
      <svg width="46" height="52" viewBox="0 0 46 52">
        <path d="M42 3V49L3 26z" fill="none" stroke="#888" strokeWidth="4" strokeLinejoin="round" />
      </svg>
      <svg width="52" height="52" viewBox="0 0 52 52">
        <circle cx="26" cy="26" r="23" fill="none" stroke="#888" strokeWidth="4" />
      </svg>
      <svg width="46" height="52" viewBox="0 0 46 52">
        <rect x="3" y="5" width="41" height="41" rx="2" fill="none" stroke="#888" strokeWidth="4" />
      </svg>
    </SystemNav>
  </Page>
);

export default App;
